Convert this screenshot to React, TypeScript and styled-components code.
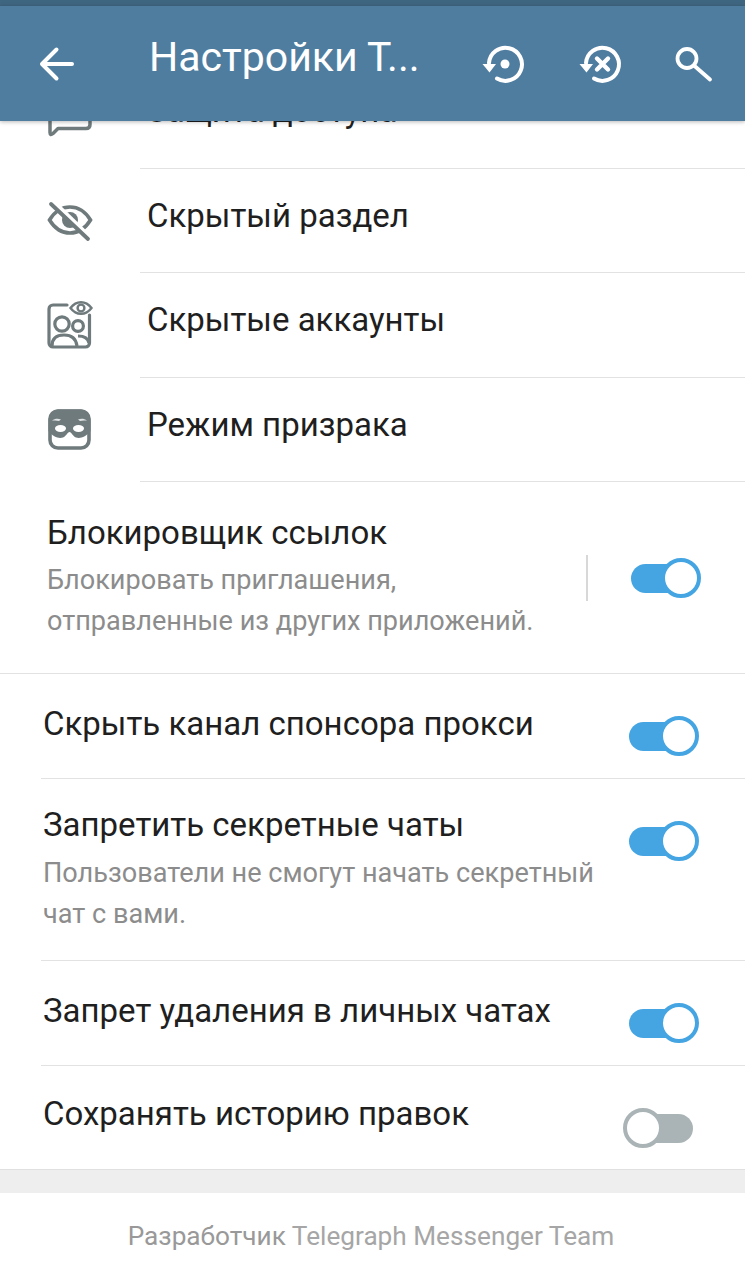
import React from "react";
import styled, { createGlobalStyle } from "styled-components";

const Global = createGlobalStyle`
  html, body { margin: 0; padding: 0; background: #fff; }
  * { box-sizing: border-box; }
`;

const Page = styled.div`
  width: 745px;
  height: 1280px;
  overflow: hidden;
  background: #fff;
  font-family: Roboto, "Noto Sans", sans-serif;
  display: flex;
  flex-direction: column;
`;

const StatusStrip = styled.div`
  height: 6px;
  flex: none;
  background: #3f6681;
`;

const Header = styled.header`
  height: 115px;
  flex: none;
  background: #4f7da0;
  display: flex;
  align-items: center;
  position: relative;
  z-index: 2;
  box-shadow: 0 1px 4px rgba(0, 0, 0, 0.28);
`;

const BackSlot = styled.div`
  width: 149px;
  padding-left: 39px;
  display: flex;
`;

const Title = styled.div`
  width: 333px;
  color: #fff;
  font-size: 41px;
  line-height: 44px;
  margin-top: -14px;
  white-space: nowrap;
`;

const Actions = styled.div`
  display: flex;
  align-items: center;
  gap: 50.5px;
`;

const Scroll = styled.main`
  flex: 1;
  min-height: 0;
  overflow: hidden;
`;

const LinkRows = styled.section`
  margin-top: -57px;
`;

const LinkRow = styled.div`
  height: 104.5px;
  display: flex;
  align-items: center;
`;

const IconSlot = styled.div`
  width: 140px;
  flex: none;
  padding-left: 45px;
  display: flex;
`;

const LinkBody = styled.div`
  flex: 1;
  align-self: stretch;
  display: flex;
  align-items: center;
  padding: 0 0 10px 7px;
  border-bottom: 1px solid #e2e2e2;
  color: #1f1f1f;
  font-size: 33px;
`;

const SwitchRows = styled.section`
  border-bottom: 1px solid #e0e0e0;
`;

const SwitchRow = styled.div<{ $h: number; $top: number; $inset?: number; $last?: boolean }>`
  height: ${(p) => p.$h}px;
  margin-left: ${(p) => (p.$inset ? 0 : 41)}px;
  padding-left: ${(p) => p.$inset ?? 2}px;
  padding-top: ${(p) => p.$top}px;
  border-bottom: ${(p) => (p.$last ? "none" : "1px solid #e2e2e2")};
  display: flex;
  align-items: flex-start;
  position: relative;
`;

const Texts = styled.div`
  flex: 1;
  min-width: 0;
`;

const RowTitle = styled.div`
  color: #1f1f1f;
  font-size: 33px;
  line-height: 40px;
  white-space: nowrap;
`;

const RowSub = styled.div<{ $gap: number }>`
  color: #8c8c8c;
  font-size: 27.1px;
  line-height: 41px;
  margin-top: ${(p) => p.$gap}px;
  white-space: pre-line;
`;

const VRule = styled.div`
  position: absolute;
  left: 586px;
  top: 73px;
  width: 2px;
  height: 46px;
  background: #d8d8d8;
`;

const ToggleWrap = styled.div<{ $right: number; $top: number }>`
  position: absolute;
  right: ${(p) => p.$right}px;
  top: ${(p) => p.$top}px;
  width: 70px;
  height: 40px;
`;

const Track = styled.div<{ $on: boolean }>`
  position: absolute;
  top: 6px;
  height: 29px;
  border-radius: 15px;
  left: ${(p) => (p.$on ? 0 : 10)}px;
  width: 60px;
  background: ${(p) => (p.$on ? "#45a5e3" : "#aab4b6")};
`;

const Thumb = styled.div<{ $on: boolean }>`
  position: absolute;
  top: 0;
  left: ${(p) => (p.$on ? 30 : 0)}px;
  width: 40px;
  height: 40px;
  border-radius: 50%;
  background: #fff;
  border: 4px solid ${(p) => (p.$on ? "#45a5e3" : "#aab4b6")};
`;

const Gap = styled.div`
  height: 23px;
  background: #eeeeee;
`;

const Footer = styled.footer`
  height: 87px;
  display: flex;
  align-items: center;
  justify-content: center;
  padding: 0 3px 2px 0;
  font-size: 26.2px;
  color: #a6a6a6;
  white-space: pre;
`;

const Dev = styled.span`
  color: #999999;
`;

const Toggle = ({ on, right, top }: { on: boolean; right: number; top: number }) => (
  <ToggleWrap $right={right} $top={top}>
    <Track $on={on} />
    <Thumb $on={on} />
  </ToggleWrap>
);

const Back = () => (
  <svg width="36" height="36" viewBox="0 0 36 36" fill="none" stroke="#fff" strokeWidth="4" strokeLinecap="round" strokeLinejoin="round">
    <path d="M33 18H4M17.5 3.5L3 18L17.5 32.5" />
  </svg>
);

const Restore = () => (
  <svg width="46" height="46" viewBox="0 0 46 46" fill="none">
    <path d="M7 22A16.5 16.5 0 1 1 15 37.5" stroke="#fff" strokeWidth="4" strokeLinecap="round" />
    <path d="M0.5 23H14L7.5 31.5Z" fill="#fff" />
    <circle cx="23" cy="23" r="4.5" fill="#fff" />
  </svg>
);

const RestoreX = () => (
  <svg width="46" height="46" viewBox="0 0 46 46" fill="none">
    <path d="M7 22A16.5 16.5 0 1 1 15 37.5" stroke="#fff" strokeWidth="4" strokeLinecap="round" />
    <path d="M0.5 23H14L7.5 31.5Z" fill="#fff" />
    <path d="M18 17.5L29 28.5M29 17.5L18 28.5" stroke="#fff" strokeWidth="4.4" strokeLinecap="round" />
  </svg>
);

const Search = () => (
  <svg width="40" height="40" viewBox="0 0 40 40" fill="none" stroke="#fff" strokeWidth="3.8" strokeLinecap="round">
    <circle cx="12" cy="14.5" r="9.5" />
    <path d="M19 21.5L35 35.5" />
  </svg>
);

const IC = "#6f7a7c";

const Bubble = () => (
  <svg width="48" height="48" viewBox="0 0 48 48" fill="none" stroke={IC} strokeWidth="3.5" strokeLinejoin="round">
    <path d="M5 6V40.5Q5 44 8 41.5L13 36.5H41Q45 36.5 45 32.5V6A4 4 0 0 0 41 2H9A4 4 0 0 0 5 6Z" />
  </svg>
);

const EyeOff = () => (
  <svg width="48" height="48" viewBox="0 0 48 48" fill="none" stroke={IC} strokeWidth="3.6" strokeLinecap="round">
    <path d="M4.5 23C10 14 17 10 25 10S40 14 45.5 23C40 32 33 36 25 36S10 32 4.5 23Z" />
    <circle cx="25" cy="23" r="8" fill={IC} stroke="none" />
    <path d="M9 5L46 41" stroke="#fff" strokeWidth="4" />
    <path d="M6 7L43 42" strokeWidth="3.8" />
  </svg>
);

const Contacts = () => (
  <svg width="48" height="48" viewBox="0 0 48 48" fill="none" stroke={IC} strokeWidth="3.2">
    <path d="M44.5 14V42A4 4 0 0 1 40.5 46H8A4 4 0 0 1 4 42V8A4 4 0 0 1 8 4H22" strokeLinecap="round" />
    <path d="M25.5 7C28.5 3 32 1.2 36 1.2S43.5 3 46.5 7C43.5 11 40 12.8 36 12.8S28.5 11 25.5 7Z" strokeWidth="2.4" />
    <circle cx="36" cy="7" r="3.4" strokeWidth="2.4" />
    <circle cx="17" cy="23" r="7.2" />
    <circle cx="33" cy="25" r="5.4" />
    <path d="M7 45C7 37 12 34 19 34C26 34 31 37 32 45M33 35C39 35 43 37 44 42" />
  </svg>
);

const Mask = () => (
  <svg width="48" height="48" viewBox="0 0 48 48">
    <rect x="5" y="5" width="39" height="37" rx="8" fill="#fff" stroke={IC} strokeWidth="3.6" />
    <path
      fill={IC}
      d="M3.5 15C3.5 8 8 3.5 13 3.5H36C41 3.5 45.5 8 45.5 15V25C41 31 35 33 31 31.5C28 30.5 26.5 26 24.5 26C22.5 26 21 30.5 18 31.5C14 33 8 31 3.5 25Z"
    />
    <path d="M7 14.5C10 12.5 13 12.5 16 13.5L14 15C11 14.5 9 14.5 7 14.5ZM42 14.5C39 12.5 36 12.5 33 13.5L35 15C38 14.5 40 14.5 42 14.5Z" fill="#dfe3e3" />
    <ellipse cx="15.5" cy="22.5" rx="5.5" ry="3.4" fill="#fff" />
    <ellipse cx="33.5" cy="22.5" rx="5.5" ry="3.4" fill="#fff" />
  </svg>
);

const links = [
  { icon: <Bubble />, label: "Защита доступа" },
  { icon: <EyeOff />, label: "Скрытый раздел" },
  { icon: <Contacts />, label: "Скрытые аккаунты" },
  { icon: <Mask />, label: "Режим призрака" },
];

export default function App() {
  return (
    <Page>
      <Global />
      <StatusStrip />
      <Header>
        <BackSlot>
          <Back />
        </BackSlot>
        <Title>Настройки Т...</Title>
        <Actions>
          <Restore />
          <RestoreX />
          <Search />
        </Actions>
      </Header>
      <Scroll>
        <LinkRows>
          {links.map((l) => (
            <LinkRow key={l.label}>
              <IconSlot>{l.icon}</IconSlot>
              <LinkBody>{l.label}</LinkBody>
            </LinkRow>
          ))}
        </LinkRows>
        <SwitchRows>
          <SwitchRow $h={192} $top={31} $inset={47}>
            <Texts>
              <RowTitle>Блокировщик ссылок</RowTitle>
              <RowSub $gap={7}>{"Блокировать приглашения,\nотправленные из других приложений."}</RowSub>
            </Texts>
            <VRule />
            <Toggle on right={44} top={76} />
          </SwitchRow>
          <SwitchRow $h={105} $top={30}>
            <Texts>
              <RowTitle>Скрыть канал спонсора прокси</RowTitle>
            </Texts>
            <Toggle on right={46} top={42} />
          </SwitchRow>
          <SwitchRow $h={182} $top={26}>
            <Texts>
              <RowTitle>Запретить секретные чаты</RowTitle>
              <RowSub $gap={8}>{"Пользователи не смогут начать секретный\nчат с вами."}</RowSub>
            </Texts>
            <Toggle on right={46} top={42} />
          </SwitchRow>
          <SwitchRow $h={105} $top={30}>
            <Texts>
              <RowTitle>Запрет удаления в личных чатах</RowTitle>
            </Texts>
            <Toggle on right={46} top={42} />
          </SwitchRow>
          <SwitchRow $h={103} $top={28} $last>
            <Texts>
              <RowTitle>Сохранять историю правок</RowTitle>
            </Texts>
            <Toggle on={false} right={52} top={42} />
          </SwitchRow>
        </SwitchRows>
        <Gap />
        <Footer>
          <Dev>Разработчик</Dev> Telegraph Messenger Team
        </Footer>
      </Scroll>
    </Page>
  );
}
